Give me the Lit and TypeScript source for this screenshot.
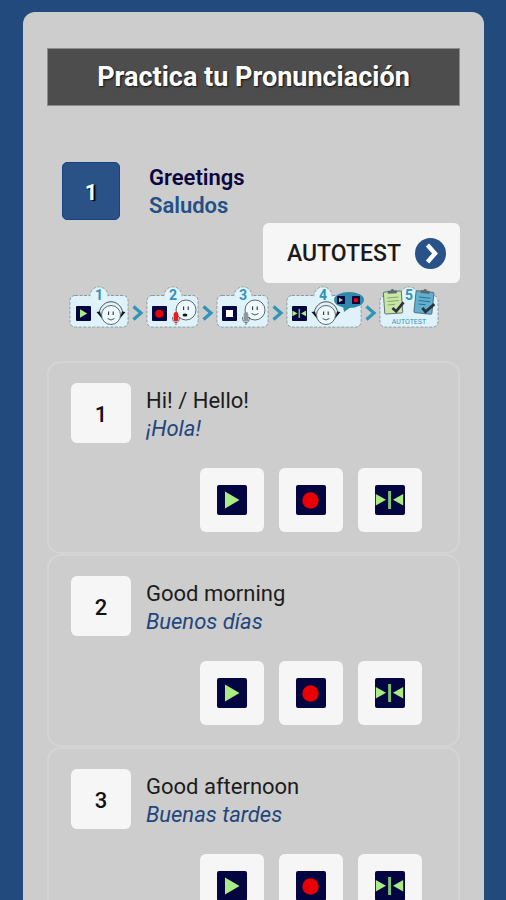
import { LitElement, html, svg, css } from "lit";
import { customElement, state } from "lit/decorators.js";

interface Phrase {
  en: string;
  es: string;
}

const NAVY = "#020540";
const GREEN = "#a9ec84";
const RED = "#ea0000";
const TEAL = "#2f94b8";

/* Glyphs drawn on a 30-unit grid. */
const playGlyph = svg`
  <rect width="30" height="30" rx="2" fill=${NAVY} />
  <path d="M8 6.5 L22.5 15 L8 23.5 Z" fill=${GREEN} />`;
const recordGlyph = svg`
  <rect width="30" height="30" rx="2" fill=${NAVY} />
  <circle cx="14.5" cy="15.5" r="8.2" fill=${RED} />`;
const stopGlyph = svg`
  <rect width="30" height="30" rx="2" fill=${NAVY} />
  <rect x="8" y="8" width="14" height="14" fill="#fff" />`;
const compareGlyph = svg`
  <rect width="30" height="30" rx="2" fill=${NAVY} />
  <path d="M0.8 9 L11 14.8 L0.8 20.6 Z M28.2 9 L18 14.8 L28.2 20.6 Z" fill=${GREEN} />
  <path d="M14.6 6 V24" stroke="#7fbf78" stroke-width="3" />`;

const place = (glyph: unknown, x: number, y: number, size: number) =>
  svg`<g transform="translate(${x} ${y}) scale(${size / 30})">${glyph}</g>`;

const bubble = (width: number, cx: number, n: string) => svg`
  <g fill="#dff2fa" stroke="#8b98a0" stroke-width="1" stroke-dasharray="3 1.5">
    <rect x="1" y="9.5" width=${width - 2} height="31.5" rx="5" />
    <circle cx=${cx} cy="10" r="9" />
  </g>
  <rect x="1.8" y="10.2" width=${width - 3.6} height="30" rx="4.5" fill="#dff2fa" />
  <circle cx=${cx} cy="10" r="8.4" fill="#e2f3fa" />
  <text x=${cx} y="14" text-anchor="middle" class="digit">${n}</text>`;

const face = (cx: number, cy: number, r: number) => svg`
  <circle cx=${cx} cy=${cy} r=${r} fill="#eef9fd" stroke="#39424c" stroke-width="0.8" />
  <path d="M${cx - 2.4} ${cy - 3.5} v3.6 M${cx + 2.2} ${cy - 3.5} v3.6"
    stroke="#2a3340" stroke-width="1.1" />`;

const smile = (cx: number, cy: number) => svg`
  <path d="M${cx - 3.5} ${cy + 3.5} q3.5 3 7 0" fill="none" stroke="#39424c" stroke-width="0.9" />`;

const listener = (cx: number, cy: number) => svg`
  <path d="M${cx - 12} ${cy - 2} C${cx - 9} ${cy - 17} ${cx + 9} ${cy - 17} ${cx + 12} ${cy - 2}"
    fill="none" stroke="#39424c" stroke-width="0.9" />
  ${face(cx, cy, 9.5)}${smile(cx, cy)}
  <path d="M${cx - 14.5} ${cy - 3} L${cx - 11} ${cy - 3.5} L${cx - 9} ${cy + 3.5} Z
    M${cx + 14.5} ${cy - 3} L${cx + 11} ${cy - 3.5} L${cx + 9} ${cy + 3.5} Z" fill="#10141c" />`;

const microphone = (cx: number, cy: number, fill: string) => svg`
  <path d="M${cx - 3.5} ${cy} q0 5.5 3.5 5.5 q3.5 0 3.5 -5.5 M${cx} ${cy + 5} v3"
    fill="none" stroke="#59636b" stroke-width="0.9" />
  <rect x=${cx - 2.3} y=${cy - 5} width="4.6" height="9.5" rx="2.3" fill=${fill} />`;

const clipboard = (cx: number, cy: number, paper: string, line: string, tilt: number) => svg`
  <g transform="translate(${cx} ${cy}) rotate(${tilt})">
    <rect x="-9" y="-10.5" width="18" height="22" rx="1" fill=${paper} stroke="#4a5a60" stroke-width="0.8" />
    <path d="M-4.5 -8.5 h9 v-3 h-2.5 q-2 -3 -4 0 H-4.5 Z" fill="#5b6a70" />
    <path d="M-5.5 -4.5 H6 M-5.5 -1 H6 M-5.5 2.5 H2" stroke=${line} stroke-width="1" />
    <path d="M-1 6 L2.5 9.5 L10.5 1" fill="none" stroke="#2b343c" stroke-width="2.8" />
  </g>`;

const steps = [
  {
    width: 60,
    label: "Escucha",
    art: svg`${bubble(60, 30, "1")}${place(playGlyph, 7, 20, 15)}${listener(42, 29)}`,
  },
  {
    width: 53,
    label: "Graba",
    art: svg`${bubble(53, 27, "2")}${place(recordGlyph, 6, 20, 15)}${face(40, 24, 10)}
      <ellipse cx="39" cy="29" rx="2.4" ry="1.5" fill="#10141c" />${microphone(30, 31, "#f01818")}`,
  },
  {
    width: 53,
    label: "Detén",
    art: svg`${bubble(53, 27, "3")}${place(stopGlyph, 6, 20, 15)}${face(39, 24, 10)}${smile(39, 24)}
      ${microphone(30, 31, "#8d979c")}`,
  },
  {
    width: 76,
    label: "Compara",
    art: svg`${bubble(76, 37, "4")}${place(compareGlyph, 6, 20, 15)}${listener(40, 29)}
      <path d="M57 20 L58 26 L65 21 Z" fill="#3089aa" />
      <ellipse cx="63" cy="14" rx="15" ry="8" fill="#3089aa" />
      ${place(playGlyph, 51, 10, 8)}${place(recordGlyph, 66, 10, 8)}`,
  },
  {
    width: 60,
    label: "Autotest",
    art: svg`${bubble(60, 30, "5")}${clipboard(14, 16, "#c9e6a4", "#86a573", -4)}
      ${clipboard(45, 16, "#62b0d0", "#2c6f90", 6)}
      <text x="30" y="38" text-anchor="middle" class="caption">AUTOTEST</text>`,
  },
];

@customElement("phrase-card")
export class PhraseCard extends LitElement {
  static properties = {
    number: { type: Number },
    phrase: { attribute: false },
  };

  declare number: number;
  declare phrase: Phrase;

  static styles = css`
    :host {
      display: block;
      box-sizing: border-box;
      border: 2px solid #d4d4d4;
      border-radius: 14px;
      padding: 20px 36px 20px 22px;
      font-size: 22px;
      line-height: 28px;
    }
    .top {
      display: flex;
      align-items: center;
      gap: 15px;
    }
    .number {
      flex: none;
      display: grid;
      place-items: center;
      box-sizing: border-box;
      width: 60px;
      height: 60px;
      padding-top: 4px;
      border-radius: 6px;
      background: #f6f6f6;
      color: #111;
      font-weight: 500;
    }
    .text {
      padding-top: 4px;
    }
    .en,
    .es {
      margin: 0;
    }
    .en {
      color: #1c1c1c;
    }
    .es {
      color: #1f467c;
      font-style: italic;
    }
    .actions {
      display: flex;
      justify-content: flex-end;
      gap: 15px;
      margin-top: 25px;
    }
    .action {
      display: grid;
      place-items: center;
      width: 64px;
      height: 64px;
      padding: 0;
      border: 0;
      border-radius: 6px;
      background: #f6f6f6;
      cursor: pointer;
    }
    .glyph {
      display: block;
      width: 30px;
      height: 30px;
    }
  `;

  private action(label: string, glyph: unknown) {
    return html`<button class="action" type="button" aria-label=${label}>
      <svg class="glyph" viewBox="0 0 30 30" aria-hidden="true">${glyph}</svg>
    </button>`;
  }

  render() {
    return html`
      <div class="top">
        <span class="number">${this.number}</span>
        <div class="text">
          <p class="en" lang="en">${this.phrase.en}</p>
          <p class="es">${this.phrase.es}</p>
        </div>
      </div>
      <div class="actions">
        ${this.action("Escuchar", playGlyph)}
        ${this.action("Grabar", recordGlyph)}
        ${this.action("Comparar", compareGlyph)}
      </div>
    `;
  }
}

@customElement("app-root")
export class AppRoot extends LitElement {
  @state() private phrases: Phrase[] = [
    { en: "Hi! / Hello!", es: "¡Hola!" },
    { en: "Good morning", es: "Buenos días" },
    { en: "Good afternoon", es: "Buenas tardes" },
  ];

  static styles = css`
    :host {
      display: block;
      box-sizing: border-box;
      height: 100vh;
      overflow-y: auto;
      scrollbar-width: none;
      padding: 12px 22px 0 23px;
      background: #234a7d;
      font-family: Roboto, sans-serif;
      font-size: 22px;
      line-height: 28px;
    }
    .panel {
      box-sizing: border-box;
      padding: 36px 24px;
      border-radius: 12px;
      background: #cdcdcd;
    }
    .title {
      margin: 0;
      padding: 14px 8px;
      border: 1px solid #8c8c8c;
      background: #4d4d4d;
      color: #fff;
      font-size: 27px;
      font-weight: 700;
      text-align: center;
      text-shadow: 1px 1px 2px #111;
    }
    .unit {
      display: flex;
      align-items: center;
      gap: 29px;
      margin: 56px 0 0 15px;
    }
    .unit-number {
      flex: none;
      display: grid;
      place-items: center;
      box-sizing: border-box;
      width: 58px;
      height: 58px;
      padding-top: 4px;
      border: 1px solid #164382;
      border-radius: 5px;
      background: #2a5286;
      color: #fff;
      font-weight: 700;
      text-shadow: 2px 1px 1px #000;
    }
    .unit-text {
      padding-top: 2px;
    }
    .unit-name,
    .unit-translation {
      margin: 0;
      font-size: 22px;
      font-weight: 600;
    }
    .unit-name {
      color: #0b0640;
    }
    .unit-translation {
      color: #235087;
    }
    .autotest {
      display: flex;
      align-items: center;
      gap: 14px;
      height: 60px;
      margin: 3px 0 3px auto;
      padding: 0 14px 0 24px;
      border: 0;
      border-radius: 6px;
      background: #f6f6f6;
      color: #1a1a1a;
      font: 500 23px/28px Roboto, sans-serif;
      cursor: pointer;
    }
    .autotest-label {
      padding-top: 2px;
    }
    .arrow {
      display: block;
      width: 31px;
      height: 31px;
    }
    .steps {
      display: flex;
      justify-content: center;
      margin: 0 0 32px;
      padding: 0;
      list-style: none;
    }
    .step {
      display: flex;
    }
    .art {
      display: block;
      overflow: visible;
    }
    .digit {
      fill: #2f94b8;
      font: 700 14px/1 Roboto, sans-serif;
    }
    .caption {
      fill: #2f94b8;
      font: 400 7px/1 Roboto, sans-serif;
    }
  `;

  render() {
    return html`
      <main class="panel">
        <h1 class="title">Practica tu Pronunciación</h1>
        <header class="unit">
          <span class="unit-number">1</span>
          <div class="unit-text">
            <h2 class="unit-name" lang="en">Greetings</h2>
            <p class="unit-translation">Saludos</p>
          </div>
        </header>
        <button class="autotest" type="button">
          <span class="autotest-label">AUTOTEST</span>
          <svg class="arrow" viewBox="0 0 31 31" aria-hidden="true">
            <circle cx="15.5" cy="15.5" r="15.5" fill="#295289" />
            <path d="M12.5 7 L20 15.5 L12.5 24" fill="none" stroke="#fff" stroke-width="4.4" />
          </svg>
        </button>
        <ol class="steps">
          ${steps.map(
            (step, i) => html`<li class="step">
              ${i > 0
                ? html`<svg class="art" width="17" height="43" viewBox="0 0 17 43" aria-hidden="true">
                    <path d="M4.5 20.5 L12 27 L4.5 33.5" fill="none" stroke=${TEAL} stroke-width="3.2" />
                  </svg>`
                : null}
              <svg
                class="art"
                width=${step.width}
                height="43"
                viewBox="0 0 ${step.width} 43"
                role="img"
                aria-label=${step.label}
              >
                ${step.art}
              </svg>
            </li>`
          )}
        </ol>
        ${this.phrases.map(
          (phrase, i) => html`<phrase-card .number=${i + 1} .phrase=${phrase}></phrase-card>`
        )}
      </main>
    `;
  }
}
